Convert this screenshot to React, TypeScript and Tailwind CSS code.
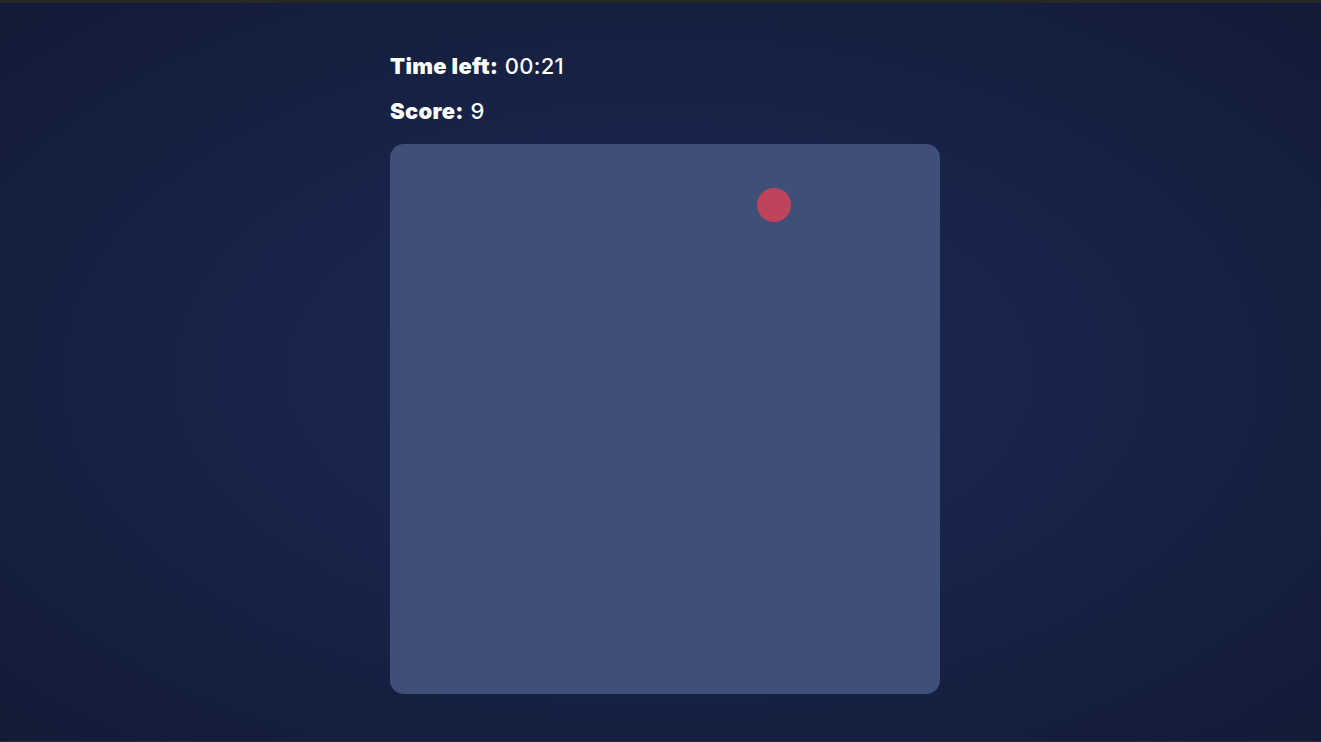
import React from "react";

function App() {
    const timeLeft = "00:21";
    const score = 9;
    const target = { x: 367, y: 44, size: 34 };

    return (
        <div className="h-[742px] w-full flex flex-col overflow-hidden" style={{ fontFamily: "Inter, 'Noto Sans', sans-serif" }}>
            <div className="h-[3px] bg-[#262729] shrink-0" />
            <main className="flex-1 flex justify-center pl-[9px] bg-[radial-gradient(ellipse_at_center,#1c2a54_0%,#18244a_40%,#121b36_100%)]">
                <div className="w-[550px] pt-[47px]">
                    <p className="h-[33px] text-[22px] leading-[33px] text-white tracking-[0.3px]">
                        <span className="font-black">Time left:</span> <span className="font-medium">{timeLeft}</span>
                    </p>
                    <p className="h-[33px] mt-[12px] text-[22px] leading-[33px] text-white tracking-[0.3px]">
                        <span className="font-black">Score:</span> <span className="font-medium">{score}</span>
                    </p>
                    <div className="relative mt-[16px] w-[550px] h-[550px] rounded-[14px] bg-[#3f4f77]">
                        <div
                            className="absolute rounded-full bg-[#c0435e]"
                            style={{ left: target.x, top: target.y, width: target.size, height: target.size }}
                        />
                    </div>
                </div>
            </main>
            <div className="h-px bg-[#2a2b2e] shrink-0" />
        </div>
    );
}

export default App;
